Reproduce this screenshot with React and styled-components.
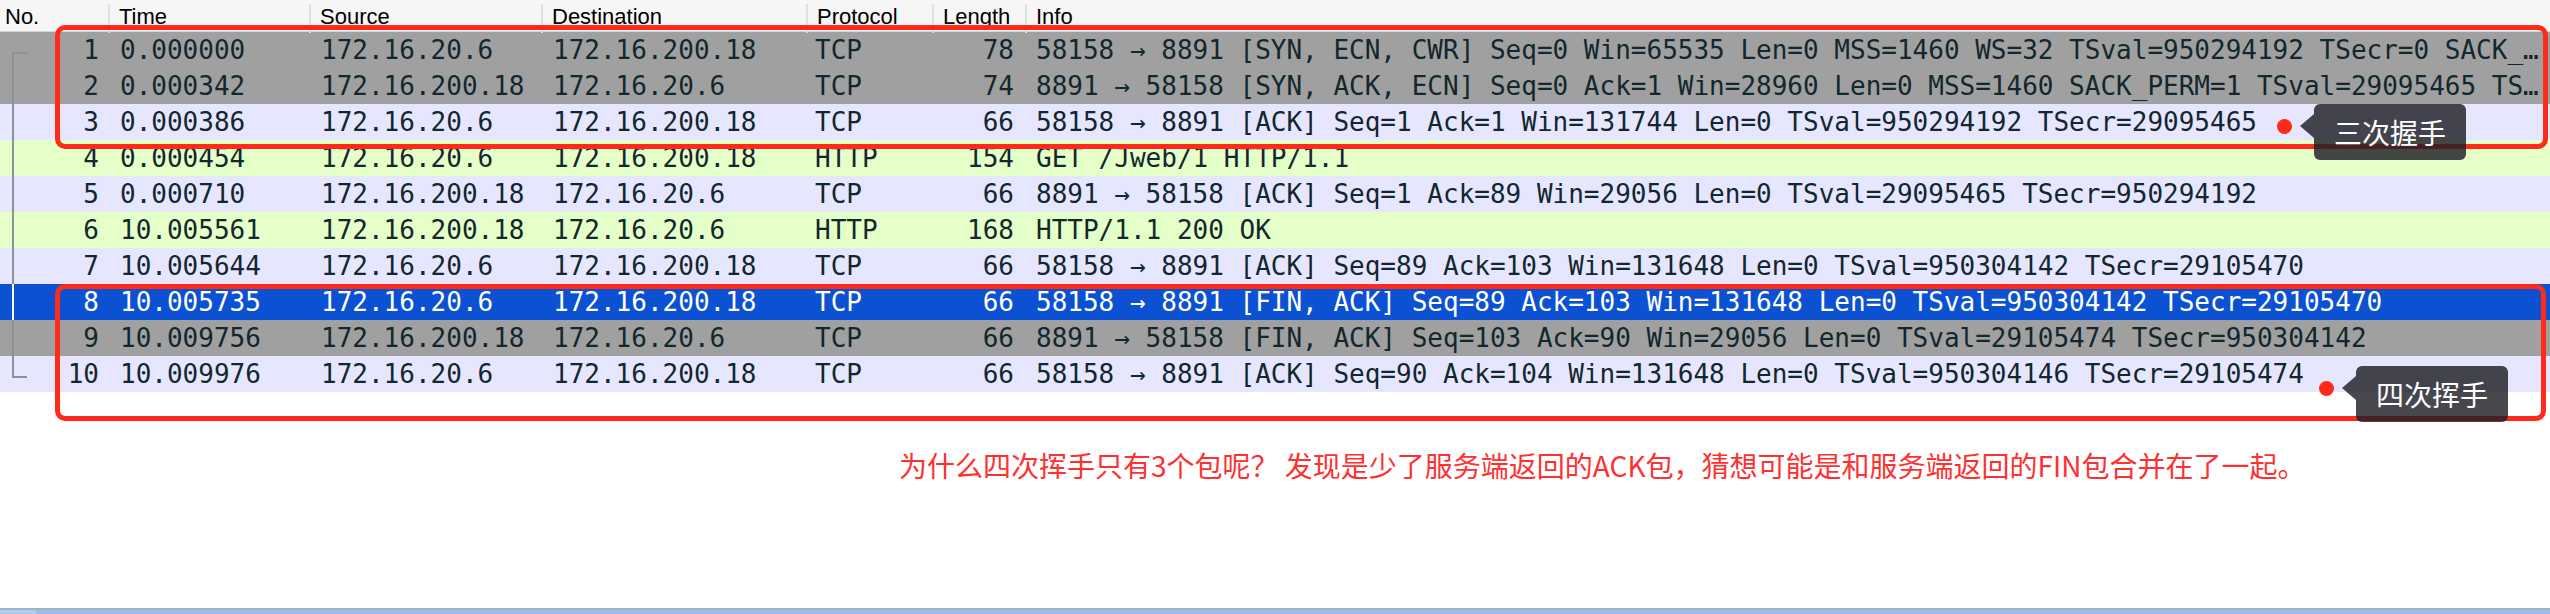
import styled, { createGlobalStyle } from 'styled-components';

const GlobalStyle = createGlobalStyle`
  html, body {
    margin: 0;
    padding: 0;
    background: #fff;
  }
  body {
    width: 2550px;
    height: 614px;
    overflow: hidden;
  }
`;

const COLUMNS = '108px 201px 232px 265px 126px 93px 1fr';

const ROW_COLORS = {
  gray: { bg: '#a0a0a0', fg: '#12272e', mark: '#8a9399' },
  tcp: { bg: '#e7e6ff', fg: '#12272e', mark: '#8a9399' },
  http: { bg: '#e4ffc7', fg: '#12272e', mark: '#8a9399' },
  selected: { bg: '#0b51d2', fg: '#ffffff', mark: '#ffffff' },
};

// info column already clipped the way the packet list shows it
const packets = [
  { no: 1, time: '0.000000', src: '172.16.20.6', dst: '172.16.200.18', proto: 'TCP', len: 78, info: '58158 → 8891 [SYN, ECN, CWR] Seq=0 Win=65535 Len=0 MSS=1460 WS=32 TSval=950294192 TSecr=0 SACK_…', kind: 'gray' },
  { no: 2, time: '0.000342', src: '172.16.200.18', dst: '172.16.20.6', proto: 'TCP', len: 74, info: '8891 → 58158 [SYN, ACK, ECN] Seq=0 Ack=1 Win=28960 Len=0 MSS=1460 SACK_PERM=1 TSval=29095465 TS…', kind: 'gray' },
  { no: 3, time: '0.000386', src: '172.16.20.6', dst: '172.16.200.18', proto: 'TCP', len: 66, info: '58158 → 8891 [ACK] Seq=1 Ack=1 Win=131744 Len=0 TSval=950294192 TSecr=29095465', kind: 'tcp' },
  { no: 4, time: '0.000454', src: '172.16.20.6', dst: '172.16.200.18', proto: 'HTTP', len: 154, info: 'GET /Jweb/1 HTTP/1.1', kind: 'http' },
  { no: 5, time: '0.000710', src: '172.16.200.18', dst: '172.16.20.6', proto: 'TCP', len: 66, info: '8891 → 58158 [ACK] Seq=1 Ack=89 Win=29056 Len=0 TSval=29095465 TSecr=950294192', kind: 'tcp' },
  { no: 6, time: '10.005561', src: '172.16.200.18', dst: '172.16.20.6', proto: 'HTTP', len: 168, info: 'HTTP/1.1 200 OK', kind: 'http' },
  { no: 7, time: '10.005644', src: '172.16.20.6', dst: '172.16.200.18', proto: 'TCP', len: 66, info: '58158 → 8891 [ACK] Seq=89 Ack=103 Win=131648 Len=0 TSval=950304142 TSecr=29105470', kind: 'tcp' },
  { no: 8, time: '10.005735', src: '172.16.20.6', dst: '172.16.200.18', proto: 'TCP', len: 66, info: '58158 → 8891 [FIN, ACK] Seq=89 Ack=103 Win=131648 Len=0 TSval=950304142 TSecr=29105470', kind: 'selected' },
  { no: 9, time: '10.009756', src: '172.16.200.18', dst: '172.16.20.6', proto: 'TCP', len: 66, info: '8891 → 58158 [FIN, ACK] Seq=103 Ack=90 Win=29056 Len=0 TSval=29105474 TSecr=950304142', kind: 'gray' },
  { no: 10, time: '10.009976', src: '172.16.20.6', dst: '172.16.200.18', proto: 'TCP', len: 66, info: '58158 → 8891 [ACK] Seq=90 Ack=104 Win=131648 Len=0 TSval=950304146 TSecr=29105474', kind: 'tcp' },
];

const Page = styled.div`
  width: 2550px;
  height: 614px;
  display: flex;
  flex-direction: column;
  background: #fff;
`;

const ListArea = styled.div`
  position: relative;
`;

const HeaderRow = styled.div`
  display: grid;
  grid-template-columns: ${COLUMNS};
  height: 32px;
  background: #f6f6f6;
  border-bottom: 1px solid #d6d6d6;
  box-sizing: border-box;
`;

const HeaderCell = styled.div`
  display: flex;
  align-items: center;
  padding: 0 0 3px ${(p) => (p.$first ? '5px' : '9px')};
  border-left: ${(p) => (p.$first ? 'none' : '2px solid #e0e0e0')};
  margin-top: 4px;
  font-family: 'Liberation Sans', Arial, sans-serif;
  font-size: 22px;
  color: #000;
  white-space: nowrap;
`;

const PacketRow = styled.div`
  display: grid;
  grid-template-columns: ${COLUMNS};
  height: 36px;
  background: ${(p) => ROW_COLORS[p.$kind].bg};
  color: ${(p) => ROW_COLORS[p.$kind].fg};
  font-family: 'DejaVu Sans Mono', 'Liberation Mono', monospace;
  font-size: 26px;
  line-height: 36px;
`;

const Cell = styled.div`
  padding: 0 ${(p) => (p.$right ? '11px' : '0')} 0 ${(p) => (p.$right ? '0' : p.$pad || '12px')};
  text-align: ${(p) => (p.$right ? 'right' : 'left')};
  white-space: nowrap;
`;

const NoCell = styled.div`
  display: flex;
  align-items: stretch;
  padding-right: 9px;
`;

const NoText = styled.span`
  margin-left: auto;
`;

function RelatedMark({ pos, color }) {
  let d = 'M13 0 V36';
  if (pos === 'first') d = 'M13 20 V36 M12 21 H27';
  if (pos === 'last') d = 'M13 0 V22 M12 21 H27';
  return (
    <svg width="28" height="36" viewBox="0 0 28 36">
      <path d={d} stroke={color} strokeWidth="2" fill="none" />
    </svg>
  );
}

const Frame = styled.div`
  position: absolute;
  left: 55px;
  top: ${(p) => p.$top}px;
  width: ${(p) => p.$width}px;
  height: ${(p) => p.$height}px;
  border: 5px solid #ff2a1a;
  border-radius: 10px;
  box-sizing: border-box;
  pointer-events: none;
`;

const Dot = styled.div`
  position: absolute;
  left: ${(p) => p.$x - 7.5}px;
  top: ${(p) => p.$y - 7.5}px;
  width: 15px;
  height: 15px;
  border-radius: 50%;
  background: #ff2a1a;
`;

const Bubble = styled.div`
  position: absolute;
  left: ${(p) => p.$x}px;
  top: ${(p) => p.$y}px;
  height: 56px;
  padding: 0 20px;
  display: flex;
  align-items: center;
  background: rgba(30, 30, 38, 0.82);
  border-radius: 6px;
  color: #fff;
  font-family: 'Noto Sans CJK SC', 'Noto Sans', sans-serif;
  font-size: 28px;
  white-space: nowrap;

  &::before {
    content: '';
    position: absolute;
    left: -14px;
    top: 10px;
    border-style: solid;
    border-width: 12px 14px 12px 0;
    border-color: transparent rgba(30, 30, 38, 0.82) transparent transparent;
  }
`;

function Callout({ dotX, dotY, text }) {
  return (
    <>
      <Dot $x={dotX} $y={dotY} />
      <Bubble $x={dotX + 30} $y={dotY - 22}>{text}</Bubble>
    </>
  );
}

const Note = styled.p`
  margin: 53px 0 0 0;
  padding-left: 899px;
  font-family: 'Noto Sans CJK SC', 'Noto Sans', sans-serif;
  font-size: 28px;
  line-height: 40px;
  color: #ff3030;
  white-space: nowrap;
`;

const Spacer = styled.div`
  flex: 1;
`;

const StatusStrip = styled.div`
  height: 6px;
  border-top: 2px solid #a7b2bd;
  background: linear-gradient(to right, #a9cff5 0 36px, #97c0ee 36px);
  box-sizing: border-box;
`;

export default function App() {
  const headers = ['No.', 'Time', 'Source', 'Destination', 'Protocol', 'Length', 'Info'];
  return (
    <Page>
      <GlobalStyle />
      <ListArea>
        <HeaderRow>
          {headers.map((h, i) => (
            <HeaderCell key={h} $first={i === 0}>{h}</HeaderCell>
          ))}
        </HeaderRow>
        {packets.map((p, i) => {
          const pos = i === 0 ? 'first' : i === packets.length - 1 ? 'last' : 'mid';
          return (
            <PacketRow key={p.no} $kind={p.kind}>
              <NoCell>
                <RelatedMark pos={pos} color={ROW_COLORS[p.kind].mark} />
                <NoText>{p.no}</NoText>
              </NoCell>
              <Cell>{p.time}</Cell>
              <Cell>{p.src}</Cell>
              <Cell>{p.dst}</Cell>
              <Cell $pad="9px">{p.proto}</Cell>
              <Cell $right>{p.len}</Cell>
              <Cell $pad="11px">{p.info}</Cell>
            </PacketRow>
          );
        })}
        <Frame $top={25} $width={2493} $height={124} />
        <Frame $top={284} $width={2491} $height={137} />
        <Callout dotX={2284} dotY={126} text="三次握手" />
        <Callout dotX={2326} dotY={388} text="四次挥手" />
      </ListArea>
      <Note>为什么四次挥手只有3个包呢？ 发现是少了服务端返回的ACK包，猜想可能是和服务端返回的FIN包合并在了一起。</Note>
      <Spacer />
      <StatusStrip />
    </Page>
  );
}
